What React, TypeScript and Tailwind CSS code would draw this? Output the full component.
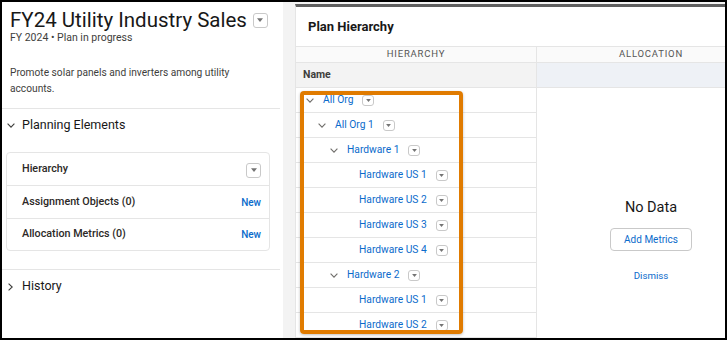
type Node = { label: string; depth: number; expandable?: boolean };

const TREE: Node[] = [
  { label: 'All Org', depth: 0, expandable: true },
  { label: 'All Org 1', depth: 1, expandable: true },
  { label: 'Hardware 1', depth: 2, expandable: true },
  { label: 'Hardware US 1', depth: 3 },
  { label: 'Hardware US 2', depth: 3 },
  { label: 'Hardware US 3', depth: 3 },
  { label: 'Hardware US 4', depth: 3 },
  { label: 'Hardware 2', depth: 2, expandable: true },
  { label: 'Hardware US 1', depth: 3 },
  { label: 'Hardware US 2', depth: 3 },
];

function MenuButton({ big }: { big?: boolean }) {
  const box = big ? 'w-[15px] h-[15px]' : 'w-[12px] h-[11px]';
  return (
    <span className={`${box} flex items-center justify-center rounded-[3px] border border-[#c9c9c9] bg-white flex-shrink-0`}>
      <svg viewBox="0 0 8 5" className={big ? 'w-[6px] h-[4px]' : 'w-[5px] h-[3px]'}>
        <path d="M0 0h8L4 5z" fill="#747474" />
      </svg>
    </span>
  );
}

function Caret({ open, className = '' }: { open: boolean; className?: string }) {
  return open ? (
    <svg viewBox="0 0 8 5" className={`w-[8px] h-[5px] ${className}`}>
      <path d="M0.6 0.6L4 4.2L7.4 0.6" fill="none" stroke="currentColor" strokeWidth="1.1" />
    </svg>
  ) : (
    <svg viewBox="0 0 5 8" className={`w-[5px] h-[8px] ${className}`}>
      <path d="M0.6 0.6L4.2 4L0.6 7.4" fill="none" stroke="currentColor" strokeWidth="1.1" />
    </svg>
  );
}

export default function App() {
  return (
    <div className="w-[727px] h-[340px] border-2 border-black bg-[#f3f3f3] flex overflow-hidden font-['Roboto',sans-serif] text-[#181818]">
      {/* left: plan details */}
      <aside className="w-[281px] flex-shrink-0 bg-white flex flex-col">
        <div className="pl-[8px] pt-[6px]">
          <div className="flex items-center gap-[6px]">
            <h1 className="text-[20.5px] leading-[24px]">FY24 Utility Industry Sales</h1>
            <MenuButton big />
          </div>
          <p className="text-[10.5px] leading-[12px] text-[#3e3e3c]">FY 2024 • Plan in progress</p>
          <p className="mt-[21px] text-[10.2px] leading-[16px] text-[#3e3e3c] pr-[40px]">
            Promote solar panels and inverters among utility accounts.
          </p>
        </div>
        <div className="mt-[11px] mr-[3px] border-t border-[#e5e5e5]" />

        <div className="h-[33px] flex items-center gap-[7px] pl-[5px]">
          <Caret open className="text-[#3e3e3c]" />
          <span className="text-[12.5px]">Planning Elements</span>
        </div>

        <div className="ml-[4px] mr-[13px] mt-[10px] border border-[#e5e5e5] rounded-[4px] text-[10.75px] font-medium text-[#2b2826]">
          <div className="h-[32px] flex items-center justify-between pl-[15px] pr-[8px]">
            <span>Hierarchy</span>
            <span className="mt-[2px]">
              <MenuButton big />
            </span>
          </div>
          <div className="h-[33px] flex items-center justify-between pl-[15px] pr-[8px] border-t border-[#e5e5e5]">
            <span>Assignment Objects (0)</span>
            <span className="text-[#0b6bcb] text-[10px]">New</span>
          </div>
          <div className="h-[32px] flex items-center justify-between pl-[15px] pr-[8px] border-t border-[#e5e5e5]">
            <span>Allocation Metrics (0)</span>
            <span className="text-[#0b6bcb] text-[10px]">New</span>
          </div>
        </div>

        <div className="mt-[18px] mr-[3px] border-t border-[#e5e5e5]" />
        <div className="h-[33px] flex items-center gap-[9px] pl-[6px]">
          <Caret open={false} className="text-[#3e3e3c]" />
          <span className="text-[12.5px]">History</span>
        </div>
      </aside>

      {/* right: hierarchy table */}
      <main className="ml-[12px] mt-[2px] flex-1 min-w-0 bg-white border-t-[3px] border-l border-t-[#5f5f5f] border-l-[#e5e5e5] flex flex-col overflow-hidden">
        <div className="h-[43px] flex items-center pl-[12px]">
          <h2 className="text-[13px] font-bold">Plan Hierarchy</h2>
        </div>

        <div className="flex flex-1">
          {/* hierarchy column */}
          <div className="w-[241px] flex-shrink-0 border-r border-[#e5e5e5] relative">
            <div className="h-[17px] flex items-center justify-center border-y border-[#e5e5e5] bg-[#fafafa] text-[9.5px] tracking-[0.8px] text-[#555]">
              HIERARCHY
            </div>
            <div className="h-[25px] flex items-center pl-[7px] bg-[#f3f3f3] border-b border-[#e5e5e5] text-[10.5px] font-bold text-[#3e3e3c]">
              Name
            </div>
            {TREE.map((node, i) => (
              <div
                key={i}
                className="h-[25px] flex items-center border-b border-[#e5e5e5] text-[10.25px] text-[#0b6bcb]"
                style={{ paddingLeft: 10 + node.depth * 12 }}
              >
                <span className="w-[17px] flex-shrink-0 flex items-center">
                  {node.expandable && <Caret open className="text-[#706e6b]" />}
                </span>
                <span className="mr-[9px]">{node.label}</span>
                <MenuButton />
              </div>
            ))}
            {/* highlight overlay */}
            <div className="absolute left-[4px] top-[45px] w-[163px] h-[243px] border-4 border-[#e07b00] rounded-[4px] shadow-[0_1px_3px_rgba(0,0,0,0.25)]" />
          </div>

          {/* allocation column */}
          <div className="w-[228px] flex-shrink-0 flex flex-col">
            <div className="h-[17px] flex items-center justify-center border-y border-[#e5e5e5] bg-[#fafafa] text-[9.5px] tracking-[0.8px] text-[#555]">
              ALLOCATION
            </div>
            <div className="h-[25px] bg-[#eef1f6] border-b border-[#e5e5e5]" />
            <div className="flex flex-col items-center pt-[110px]">
              <span className="text-[14.5px] leading-[20px]">No Data</span>
              <button className="mt-[10px] h-[23px] px-[13px] rounded-[4px] border border-[#c9c9c9] text-[10px] text-[#0b6bcb]">
                Add Metrics
              </button>
              <span className="mt-[18px] text-[9.7px] leading-[14px] text-[#0b6bcb]">Dismiss</span>
            </div>
          </div>
        </div>
      </main>
    </div>
  );
}
